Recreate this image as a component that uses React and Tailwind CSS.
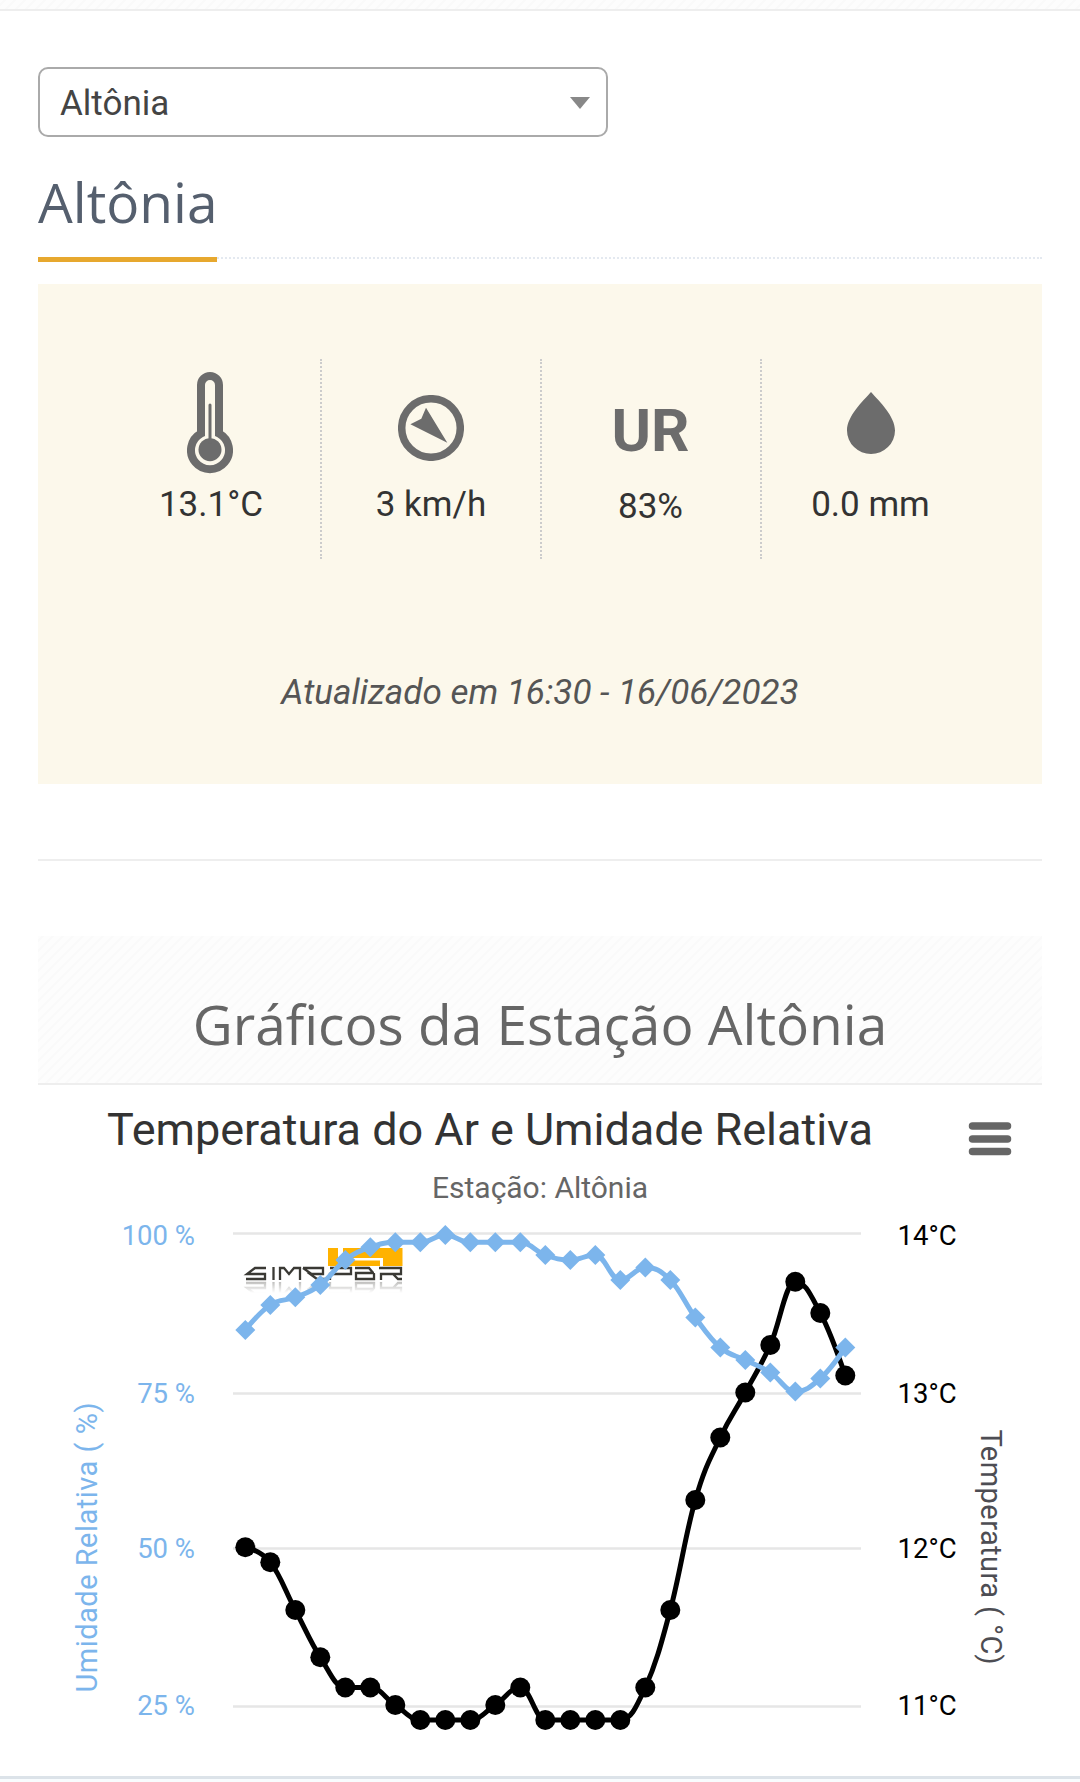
const STEP = 25;
const X0 = 245.3;

const temperatura = [
  1547.3, 1562.3, 1610, 1657.3, 1687.5, 1687.5, 1705, 1720, 1720, 1720, 1705,
  1687.5, 1720, 1720, 1720, 1720, 1687.5, 1610, 1500, 1437.5, 1392.5, 1345,
  1281.7, 1313, 1375.5,
];
const umidade = [
  1330, 1305, 1297.3, 1285, 1260, 1247.3, 1242.3, 1242.3, 1235, 1242.3, 1242.3,
  1242.3, 1255, 1260, 1255, 1280, 1267.5, 1280, 1317.5, 1347.5, 1360, 1372.5,
  1391.5, 1378.5, 1347.5,
];
const grid = [1233.5, 1393.5, 1548.5, 1706.5];

const toPoints = (values) => values.map((y, i) => [X0 + i * STEP, y]);

// Control points are pulled back so the curve never overshoots its neighbours
const spline = (pts) => {
  const k = STEP * 0.4;
  const last = pts.length - 1;
  const slope = pts.map(([, y], i) => {
    if (i === 0 || i === last) return 0;
    const prev = pts[i - 1][1];
    const next = pts[i + 1][1];
    const m = (next - prev) * 0.2;
    let left = y - m;
    let right = y + m;
    if (left > prev && left > y) {
      left = Math.max(prev, y);
      right = 2 * y - left;
    } else if (left < prev && left < y) {
      left = Math.min(prev, y);
      right = 2 * y - left;
    }
    if (right > next && right > y) {
      right = Math.max(next, y);
    } else if (right < next && right < y) {
      right = Math.min(next, y);
    }
    return right - y;
  });

  let d = `M${pts[0][0]} ${pts[0][1]}`;
  for (let i = 1; i <= last; i++) {
    const [px, py] = pts[i - 1];
    const [x, y] = pts[i];
    const x1 = i === 1 ? px : px + k;
    const x2 = i === last ? x : x - k;
    d += `C${x1} ${py + slope[i - 1]} ${x2} ${y - slope[i]} ${x} ${y}`;
  }
  return d;
};

const Hachura = ({ id }) => (
  <svg className="absolute inset-0 h-full w-full" aria-hidden="true">
    <defs>
      <pattern id={id} width="10" height="10" patternUnits="userSpaceOnUse">
        <path
          d="M-2 7L7 -2M0 15L15 0M-5 10L10 -5"
          stroke="#fafafa"
          strokeWidth="2"
        />
      </pattern>
    </defs>
    <rect width="100%" height="100%" fill={`url(#${id})`} />
  </svg>
);

const Termometro = () => (
  <svg
    className="mr-[2px]"
    width="46"
    height="102"
    viewBox="0 0 46 102"
    fill="#6c6c6c"
  >
    <path
      d="M14 61.5V13a9 9 0 0 1 18 0V61.5A19 19 0 1 1 14 61.5Z"
      fill="none"
      stroke="#6c6c6c"
      strokeWidth="8"
    />
    <circle cx="23" cy="77.7" r="11.5" />
    <rect x="21.5" y="31.5" width="3" height="40" rx="1.5" />
  </svg>
);

const Vento = () => (
  <svg width="66" height="66" viewBox="0 0 66 66" fill="#6c6c6c">
    <circle cx="33" cy="33" r="29.3" fill="none" stroke="#6c6c6c" strokeWidth="7.5" />
    <path d="M28 12.7L49.3 47.8L12.4 29.3L23.3 23.7Z" />
  </svg>
);

const Gota = () => (
  <svg width="48" height="62" viewBox="0 0 48 62" fill="#6c6c6c">
    <path d="M24 0C32 9 48 24 48 38.5A24 23.5 0 0 1 0 38.5C0 24 16 9 24 0Z" />
  </svg>
);

const Simepar = () => (
  <g>
    <defs>
      <linearGradient id="reflexo" x1="0" y1="0" x2="0" y2="1">
        <stop offset="0" stopColor="#fff" stopOpacity="0.35" />
        <stop offset="1" stopColor="#fff" stopOpacity="0" />
      </linearGradient>
      <mask id="mascara-reflexo" maskUnits="userSpaceOnUse" x="240" y="1281" width="170" height="12">
        <rect x="240" y="1281" width="170" height="12" fill="url(#reflexo)" />
      </mask>
    </defs>
    <path
      d="M328 1248h10v18h-10zM343 1248h59.5v18h-19.5v-8h-40z"
      fill="#ffb200"
    />
    <path d="M343 1260.5h37v5.5h-37z" fill="#ffb200" />
    <g id="simepar-marca" fill="none" stroke="#3a3934" strokeWidth="2.3">
      <path d="M266 1268H255L247 1274H265V1279H246" />
      <path d="M273.5 1267V1280" />
      <path d="M280 1280V1268H284L289 1274L294 1268H300V1280" />
      <path d="M303 1268H323V1274H310L317 1279H326M303 1268L313 1275" />
      <path d="M330 1280V1274H351V1268H330" />
      <path d="M355 1268H369L374 1274V1279H356V1273H374" />
      <path d="M381 1280V1274H401V1268H379M393 1274L398 1279H402" />
    </g>
    <g mask="url(#mascara-reflexo)">
      <use href="#simepar-marca" transform="translate(0 2562) scale(1 -1)" />
    </g>
  </g>
);

const medidas = [
  { icone: <Termometro />, valor: "13.1°C", pad: "pt-[13px]", gap: "mt-[11px]" },
  { icone: <Vento />, valor: "3 km/h", pad: "pt-[36px]", gap: "mt-[24px]" },
  {
    icone: (
      <span className="block text-[60px] leading-[60px] font-bold text-[#6c6c6c]">
        UR
      </span>
    ),
    valor: "83%",
    pad: "pt-[42px] pr-px",
    gap: "mt-[26px]",
  },
  { icone: <Gota />, valor: "0.0 mm", pad: "pt-[33px] pr-px", gap: "mt-[31px]" },
];

const Grafico = () => {
  const preto = toPoints(temperatura);
  const azul = toPoints(umidade);
  return (
    <svg
      className="block"
      width="1080"
      height="691"
      viewBox="0 1085 1080 691"
      fontFamily="Roboto, sans-serif"
    >
      <text x="490" y="1144.5" fontSize="45" fill="#333" textAnchor="middle" textLength="766">
        Temperatura do Ar e Umidade Relativa
      </text>
      <text x="540" y="1197.5" fontSize="30" fill="#666" textAnchor="middle" textLength="216">
        Estação: Altônia
      </text>
      <path
        d="M972.5 1126H1007.5M972.5 1139H1007.5M972.5 1151.5H1007.5"
        stroke="#666"
        strokeWidth="7.5"
        strokeLinecap="round"
      />
      {grid.map((y) => (
        <path key={y} d={`M233 ${y}H861`} stroke="#e6e6e6" strokeWidth="2.7" />
      ))}
      <Simepar />
      <g fontSize="27.5" fill="#7cb5ec" textAnchor="end">
        <text x="195" y="1245">100 %</text>
        <text x="195" y="1403">75 %</text>
        <text x="195" y="1558">50 %</text>
        <text x="195" y="1715">25 %</text>
      </g>
      <g fontSize="27.5" fill="#000">
        <text x="897.5" y="1245">14°C</text>
        <text x="897.5" y="1403">13°C</text>
        <text x="897.5" y="1558">12°C</text>
        <text x="897.5" y="1715">11°C</text>
      </g>
      <text
        transform="translate(96.5 1547.5) rotate(-90)"
        fontSize="29"
        fill="#7cb5ec"
        textAnchor="middle"
        textLength="290"
      >
        Umidade Relativa ( %)
      </text>
      <text
        transform="translate(981 1547) rotate(90)"
        fontSize="29"
        fill="#4d4d53"
        textAnchor="middle"
        textLength="235"
      >
        Temperatura ( °C)
      </text>
      <path d={spline(preto)} fill="none" stroke="#000" strokeWidth="5" />
      {preto.map(([x, y]) => (
        <circle key={x} cx={x} cy={y} r="10" />
      ))}
      <path d={spline(azul)} fill="none" stroke="#7cb5ec" strokeWidth="5" />
      {azul.map(([x, y]) => (
        <path key={x} d={`M${x} ${y - 10}l10 10l-10 10l-10 -10Z`} fill="#7cb5ec" />
      ))}
    </svg>
  );
};

const App = () => {
  return (
    <div className="flex h-[1782px] w-[1080px] flex-col overflow-hidden bg-white font-[Roboto,sans-serif]">
      <header className="relative h-[11px] shrink-0 border-b-2 border-[#eee] bg-[#fdfdfd]">
        <Hachura id="hachura-topo" />
      </header>

      <main className="px-[38px]">
        <button className="mt-[56px] flex h-[70px] w-[570px] items-center justify-between rounded-[10px] border-2 border-[#aaa] pt-[2px] pr-4 pl-5 text-[35px] leading-none text-[#444]">
          Altônia
          <svg width="20" height="12" viewBox="0 0 20 12" fill="#888">
            <path d="M0 0H20L10 12Z" />
          </svg>
        </button>

        <div className="mt-[36px] flex h-[86px] border-b-2 border-dotted border-[#e4e9f0]">
          <h2 className="box-content h-[84px] w-[179px] border-b-[5px] border-[#e7a82e] font-['Open_Sans',sans-serif] text-[55px] leading-[57px] text-[#555f6e]">
            Altônia
          </h2>
        </div>

        <section className="mt-[25px] flex h-[500px] flex-col items-center bg-[#fcf8eb] pt-[75px]">
          <div className="ml-1 grid w-[880px] grid-cols-4">
            {medidas.map(({ icone, valor, pad, gap }, i) => (
              <div
                key={valor}
                className={`flex h-[200px] flex-col items-center border-r-2 ${pad} ${
                  i < 3 ? "border-dotted border-[#ccc]" : "border-transparent"
                }`}
              >
                {icone}
                <span className={`text-[35px] leading-[40px] text-[#333] ${gap}`}>
                  {valor}
                </span>
              </div>
            ))}
          </div>
          <p className="mt-[113px] text-[35px] leading-[42px] text-[#555] italic">
            Atualizado em 16:30 - 16/06/2023
          </p>
        </section>

        <hr className="mt-[75px] border-t-2 border-[#eee]" />

        <div className="relative mt-[75px] h-[149px] border-b-2 border-[#eee] bg-[#fdfdfd]">
          <Hachura id="hachura-titulo" />
          <h2 className="relative pt-[51px] text-center font-['Open_Sans',sans-serif] text-[55px] leading-[74px] text-[#666]">
            Gráficos da Estação Altônia
          </h2>
        </div>
      </main>

      <Grafico />
      <footer className="h-[6px] shrink-0 border-t-[3px] border-[#dce3e9] bg-[#f9fcfe]" />
    </div>
  );
};

export default App;
